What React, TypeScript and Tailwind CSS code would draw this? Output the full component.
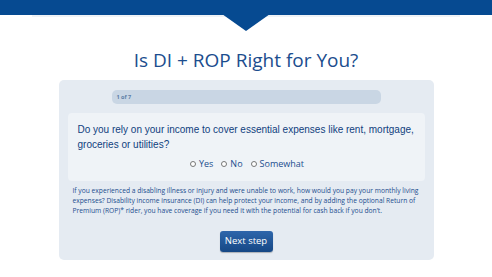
import React from "react";

export default function App() {
  return (
    <div className="w-full h-[277px] bg-white overflow-hidden" style={{ fontFamily: '"Open Sans", sans-serif' }}>
      <div className="relative">
        <div className="h-[15px] bg-[#064a91]" />
        <div className="h-[2px] mx-[32px] bg-[#eef2f6]" />
        <div className="absolute left-[222px] top-[14px] w-0 h-0 border-l-[24px] border-r-[24px] border-t-[17px] border-l-transparent border-r-transparent border-t-[#064a91]" />
      </div>
      <h1 className="mt-[30px] text-center text-[19px] leading-[26px] text-[#1b4d8e]" style={{ fontFamily: '"Open Sans", sans-serif' }}>
        Is DI + ROP Right for You?
      </h1>
      <div className="mx-auto mt-[7px] w-[375px] rounded-[5px] bg-[#e5ebf2] pt-[10px] pb-[8px] flex flex-col">
        <div className="mx-auto w-[269px] h-[14px] rounded-[5px] bg-[#c9d6e4] flex items-center px-[5px]">
          <span className="text-[5.5px] font-bold text-[#5c7ea6]">1 of 7</span>
        </div>
        <div className="mx-[9px] mt-[9px] h-[68px] rounded-[4px] bg-[#eff3f7] pl-[10px] pr-[8px] pt-[9px]">
          <p className="text-[10px] leading-[15px] text-[#103f7e]" style={{ fontFamily: '"Liberation Sans", Arial, sans-serif' }}>
            Do you rely on your income to cover essential expenses like rent, mortgage, groceries or utilities?
          </p>
          <div className="mt-[5px] flex justify-center items-center gap-[8px] text-[9px] text-[#1b4d8e]">
            {["Yes", "No", "Somewhat"].map((l) => (
              <label key={l} className="flex items-center gap-[3px]">
                <span className="inline-block w-[6px] h-[6px] rounded-full border border-[#777] bg-white" />
                <span>{l}</span>
              </label>
            ))}
          </div>
        </div>
        <p className="mt-[5px] pl-[14px] pr-[10px] text-[6.7px] leading-[10px] text-[#1b4d8e]">
          If you experienced a disabling illness or injury and were unable to work, how would you pay your monthly living expenses? Disability income insurance (DI) can help protect your income, and by adding the optional Return of Premium (ROP)* rider, you have coverage if you need it with the potential for cash back if you don’t.
        </p>
        <div className="mt-[15px] flex justify-center">
          <button className="w-[53px] h-[21px] rounded-[3px] bg-gradient-to-b from-[#2e66ab] to-[#164886] text-white text-[9.5px] shadow-[0_1px_1px_rgba(0,0,0,0.25)]">
            Next step
          </button>
        </div>
      </div>
    </div>
  );
}
